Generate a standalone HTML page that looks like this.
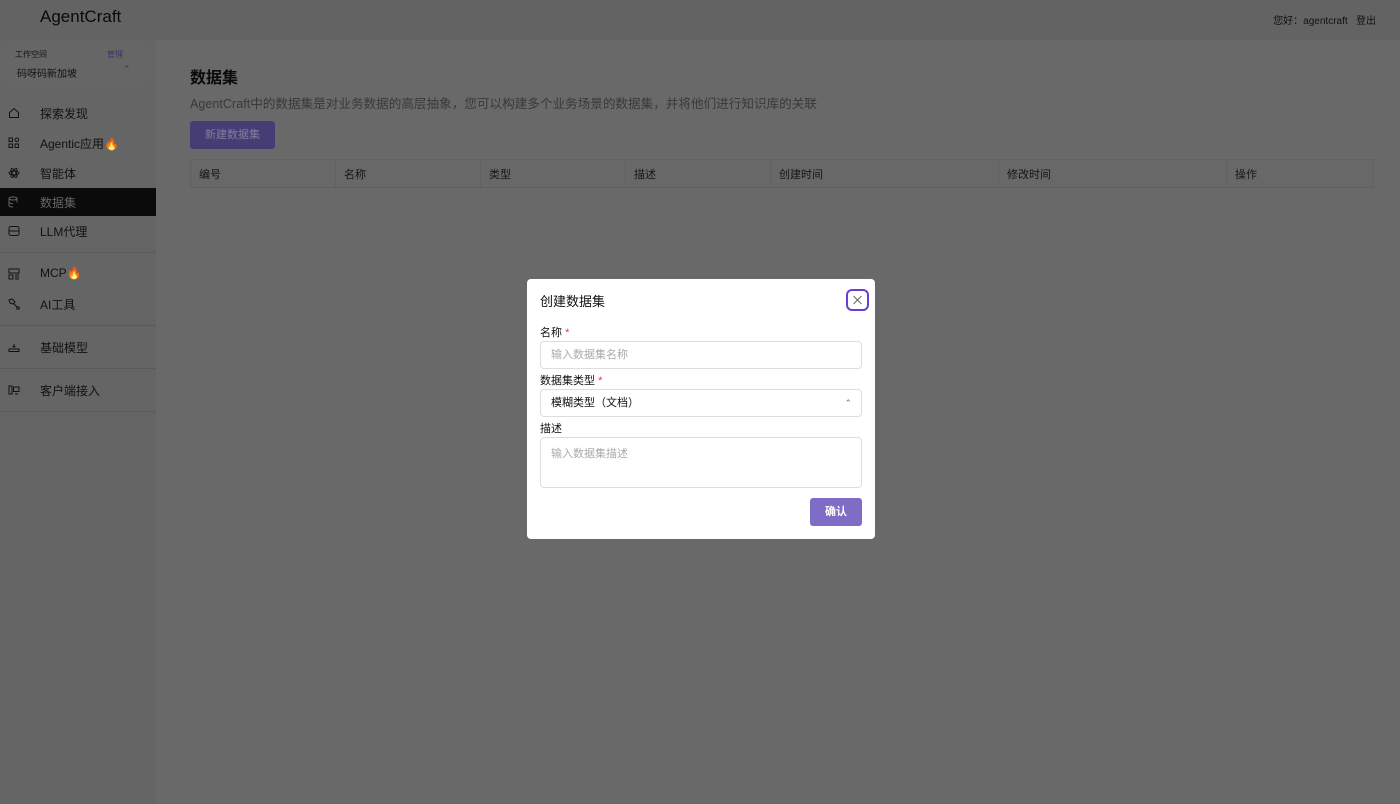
<!DOCTYPE html>
<html><head><meta charset="utf-8"><style>
*{box-sizing:border-box;margin:0;padding:0}
body{width:1400px;height:804px;overflow:hidden;background:#696969;font-family:"Liberation Sans","Noto Sans CJK SC",sans-serif;color:#111;position:relative}
.top{position:absolute;left:0;top:0;width:1400px;height:40px;background:#636363}
.logo{position:absolute;left:40px;top:7px;font-size:17px;color:#0a0a0a}
.user{position:absolute;right:24px;top:12px;font-size:10px;color:#111}
.side{position:absolute;left:0;top:40px;width:156px;height:764px;background:#656565}
.ws{position:absolute;left:6px;top:4px;width:140px;height:38px;background:#666;border-radius:3px}
.ws .a{position:absolute;left:9px;top:5px;font-size:8px}
.ws .m{position:absolute;left:101px;top:5px;font-size:8px;color:#3a3368}
.ws .n{position:absolute;left:11px;top:21px;font-size:10px}
.ws .c{position:absolute;left:117px;top:20px;font-size:9px;color:#333}
.it{position:absolute;left:0;width:156px;height:28px;font-size:12px;color:#111}
.it span{position:absolute;left:40px;top:6px}
.it svg{position:absolute;left:8px;top:8px}
.act{background:#0b0b0b;color:#666}
.sep{position:absolute;left:0;width:156px;height:1px;background:#5a5a5a}
h1{position:absolute;left:190px;top:64px;font-size:16px;font-weight:bold;color:#0a0a0a}
.desc{position:absolute;left:190px;top:93px;font-size:12.6px;color:#393939}
.btn{position:absolute;left:190px;top:121px;width:85px;height:28px;background:#463d75;border-radius:3px;color:#837e9c;font-size:11px;text-align:center;line-height:28px}
table{position:absolute;left:190px;top:159px;width:1184px;border-collapse:collapse;font-size:11px;color:#151515}
td{height:28px;border:1px solid #616161;padding-left:8px;background:#686868}
.modal{position:absolute;left:527px;top:279px;width:348px;height:260px;background:#fff;border-radius:4px}
.modal .t{position:absolute;left:13px;top:12px;font-size:13px;color:#111}
.x{position:absolute;left:319px;top:10px;width:23px;height:22px;border:2px solid #6a3fd0;border-radius:6px}
.lb{position:absolute;left:13px;font-size:11px;color:#111}
.lb i{color:#e34;font-style:normal}
.in{position:absolute;left:13px;width:322px;border:1px solid #ddd;border-radius:4px;font-size:11px;color:#aaa;padding-left:10px}
.ok{position:absolute;left:283px;top:219px;width:52px;height:28px;background:#7e6cc7;border-radius:3px;color:#fff;font-size:11px;font-weight:bold;text-align:center;line-height:28px}
</style></head><body>
<div class="top"><div class="logo">AgentCraft</div><div class="user">您好：agentcraft&nbsp;&nbsp;&nbsp;登出</div></div>
<div class="side">
<div class="ws"><div class="a">工作空间</div><div class="m">管理</div><div class="n">码呀码新加坡</div><div class="c">⌃</div></div>
<div class="it" style="top:59px"><svg width="12" height="12" viewBox="0 0 12 12" fill="none" stroke="#111"><path d="M1.5 5.5L6 1.5l4.5 4v5h-9z"/></svg><span>探索发现</span></div>
<div class="it" style="top:89px"><svg width="12" height="12" viewBox="0 0 12 12" fill="none" stroke="#111"><rect x="1" y="1" width="3.5" height="3.5"/><rect x="1" y="7" width="3.5" height="3.5"/><rect x="7" y="7" width="3.5" height="3.5"/><circle cx="8.8" cy="2.8" r="1.8"/></svg><span>Agentic应用🔥</span></div>
<div class="it" style="top:119px"><svg width="12" height="12" viewBox="0 0 12 12" fill="none" stroke="#111"><ellipse cx="6" cy="6" rx="5" ry="2"/><ellipse cx="6" cy="6" rx="5" ry="2" transform="rotate(60 6 6)"/><ellipse cx="6" cy="6" rx="5" ry="2" transform="rotate(120 6 6)"/></svg><span>智能体</span></div>
<div class="it act" style="top:148px"><svg width="12" height="12" viewBox="0 0 12 12" fill="none" stroke="#666"><ellipse cx="5" cy="2.5" rx="4" ry="1.5"/><path d="M1 2.5v7c0 1 2 1.5 4 1.5M9 2.5v4M1 6c0 1 2 1.5 4 1.5"/></svg><span>数据集</span></div>
<div class="it" style="top:177px"><svg width="12" height="12" viewBox="0 0 12 12" fill="none" stroke="#111"><rect x="1" y="1.5" width="10" height="9" rx="2"/><path d="M1 6h10"/></svg><span>LLM代理</span></div>
<div class="sep" style="top:212px"></div>
<div class="it" style="top:220px"><svg width="12" height="12" viewBox="0 0 12 12" fill="none" stroke="#111"><rect x="1" y="1" width="10" height="4"/><path d="M1 7h4v4H1zM7 7h4M7 9h4M7 11h4"/></svg><span>MCP🔥</span></div>
<div class="it" style="top:250px"><svg width="12" height="12" viewBox="0 0 12 12" fill="none" stroke="#111"><path d="M1 2l3-1 3 3-2 2-3-1zM6 6l3 3"/><circle cx="10" cy="10" r="1.3"/></svg><span>AI工具</span></div>
<div class="sep" style="top:285px"></div>
<div class="it" style="top:293px"><svg width="12" height="12" viewBox="0 0 12 12" fill="none" stroke="#111"><path d="M1 8h10v2.5H1zM6 3v4M4.5 5.5h3"/></svg><span>基础模型</span></div>
<div class="sep" style="top:328px"></div>
<div class="it" style="top:336px"><svg width="12" height="12" viewBox="0 0 12 12" fill="none" stroke="#111"><rect x="1" y="2" width="3" height="8"/><rect x="5.5" y="3" width="5.5" height="4.5"/><path d="M7 10h3"/></svg><span>客户端接入</span></div>
<div class="sep" style="top:371px"></div>
</div>
<h1>数据集</h1>
<div class="desc">AgentCraft中的数据集是对业务数据的高层抽象，您可以构建多个业务场景的数据集，并将他们进行知识库的关联</div>
<div class="btn">新建数据集</div>
<table><tr><td style="width:145px">编号</td><td style="width:145px">名称</td><td style="width:145px">类型</td><td style="width:145px">描述</td><td style="width:228px">创建时间</td><td style="width:228px">修改时间</td><td>操作</td></tr></table>
<div class="modal">
<div class="t">创建数据集</div>
<div class="x"><svg width="19" height="18" viewBox="0 0 19 18" stroke="#666" stroke-width="1"><path d="M5.5 5l8 8M13.5 5l-8 8"/></svg></div>
<div class="lb" style="top:45px">名称 <i>*</i></div>
<div class="in" style="top:62px;height:28px;line-height:26px">输入数据集名称</div>
<div class="lb" style="top:93px">数据集类型 <i>*</i></div>
<div class="in" style="top:110px;height:28px;line-height:26px;color:#111">模糊类型（文档）<span style="position:absolute;right:9px;top:0;color:#777;font-size:9px">⌃</span></div>
<div class="lb" style="top:141px">描述</div>
<div class="in" style="top:158px;height:51px;line-height:16px;padding-top:8px">输入数据集描述</div>
<div class="ok">确认</div>
</div>
</body></html>
